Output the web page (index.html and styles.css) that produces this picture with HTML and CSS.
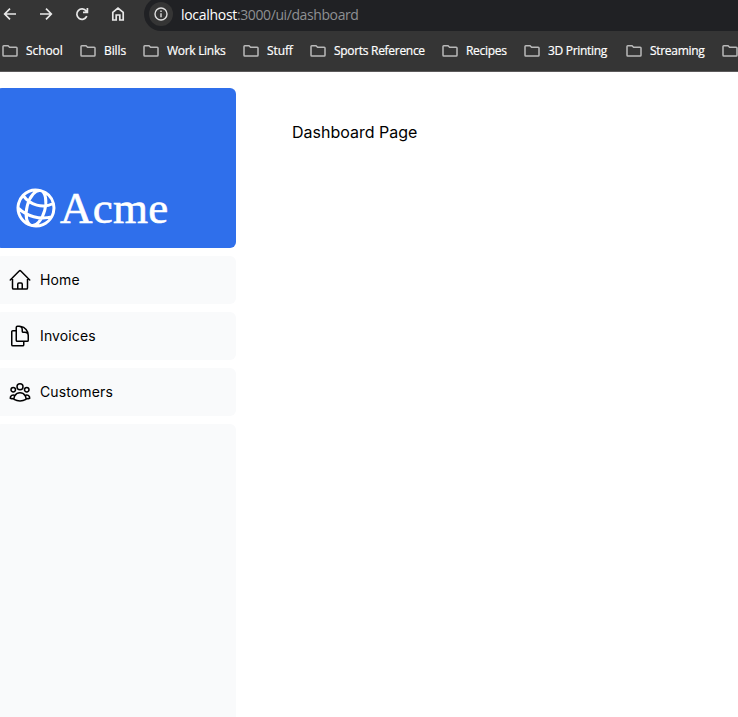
FILE: index.html
```html
<!DOCTYPE html>
<html lang="en">
<head>
<meta charset="utf-8">
<title>Dashboard</title>
<link rel="stylesheet" href="styles.css">
</head>
<body>
<svg class="defs" width="0" height="0">
  <symbol id="folder" viewBox="0 0 16 14"><path d="M1 11.2V2.5Q1 1.7 1.8 1.7H6l1.6 1.6h6.6q.8 0 .8.8v7.1q0 .8-.8.8H1.8q-.8 0-.8-.8Z" fill="none" stroke="#b9b9b9" stroke-width="1.5"/></symbol>
</svg>
<header class="browser">
  <div class="toolbar">
    <nav class="controls">
      <svg viewBox="0 0 16 16"><path d="M14 8H3M8 2.7 2.7 8 8 13.3"/></svg>
      <svg viewBox="0 0 16 16"><path d="M2 8h11M8 2.7 13.3 8 8 13.3"/></svg>
      <svg viewBox="0 0 16 16"><path d="M12.8 10.2A5.2 5.2 0 1 1 12.2 5L13 6M13.4 2v4.4H9"/></svg>
      <svg viewBox="0 0 16 16"><path d="M2.8 14V6.3L8 2.2l5.2 4.1V14H9.8V9H6.2v5Z"/></svg>
    </nav>
    <div class="address">
      <span class="info"><svg viewBox="0 0 16 16"><circle cx="8" cy="8" r="6"/><path d="M8 7.2v4M8 4.5v1.6"/></svg></span>
      <span class="url"><b>localhost</b>:3000/ui/dashboard</span>
    </div>
  </div>
  <div class="bookmarks">
    <a class="school"><svg><use href="#folder"/></svg><span>School</span></a>
    <a class="bills"><svg><use href="#folder"/></svg><span>Bills</span></a>
    <a class="work"><svg><use href="#folder"/></svg><span>Work Links</span></a>
    <a class="stuff"><svg><use href="#folder"/></svg><span>Stuff</span></a>
    <a class="sports"><svg><use href="#folder"/></svg><span>Sports Reference</span></a>
    <a class="recipes"><svg><use href="#folder"/></svg><span>Recipes</span></a>
    <a class="printing"><svg><use href="#folder"/></svg><span>3D Printing</span></a>
    <a class="streaming"><svg><use href="#folder"/></svg><span>Streaming</span></a>
    <a><svg><use href="#folder"/></svg></a>
  </div>
</header>
<div class="page">
  <aside class="sidebar">
    <a class="brand">
      <svg class="globe" viewBox="0 0 24 24"><path d="M12 21a9.004 9.004 0 0 0 8.716-6.747M12 21a9.004 9.004 0 0 1-8.716-6.747M12 21c2.485 0 4.5-4.03 4.5-9S14.485 3 12 3m0 18c-2.485 0-4.5-4.03-4.5-9S9.515 3 12 3m0 0a8.997 8.997 0 0 1 7.843 4.582M12 3a8.997 8.997 0 0 0-7.843 4.582m15.686 0A11.953 11.953 0 0 1 12 10.5c-2.998 0-5.74-1.1-7.843-2.918m15.686 0A8.959 8.959 0 0 1 21 12c0 .778-.099 1.533-.284 2.253m0 0A17.919 17.919 0 0 1 12 16.5c-3.162 0-6.133-.815-8.716-2.247m0 0A9.015 9.015 0 0 1 3 12c0-1.605.42-3.113 1.157-4.418"/></svg>
      <span>Acme</span>
    </a>
    <a class="link"><svg viewBox="0 0 24 24"><path d="m2.25 12 8.954-8.955c.44-.439 1.152-.439 1.591 0L21.75 12M4.5 9.75v10.125c0 .621.504 1.125 1.125 1.125H9.75v-4.875c0-.621.504-1.125 1.125-1.125h2.25c.621 0 1.125.504 1.125 1.125V21h4.125c.621 0 1.125-.504 1.125-1.125V9.75M8.25 21h8.25"/></svg><span>Home</span></a>
    <a class="link"><svg viewBox="0 0 24 24"><path d="M15.75 17.25v3.375c0 .621-.504 1.125-1.125 1.125h-9.75a1.125 1.125 0 0 1-1.125-1.125V7.875c0-.621.504-1.125 1.125-1.125H6.75a9.06 9.06 0 0 1 1.5.124m7.5 10.376h3.375c.621 0 1.125-.504 1.125-1.125V11.25c0-4.46-3.243-8.161-7.5-8.876a9.06 9.06 0 0 0-1.5-.124H9.375c-.621 0-1.125.504-1.125 1.125v3.5m7.5 10.375H9.375a1.125 1.125 0 0 1-1.125-1.125v-9.25m12 6.625v-1.875a3.375 3.375 0 0 0-3.375-3.375h-1.5a1.125 1.125 0 0 1-1.125-1.125v-1.5a3.375 3.375 0 0 0-3.375-3.375H9.75"/></svg><span>Invoices</span></a>
    <a class="link"><svg viewBox="0 0 24 24"><path d="M18 18.72a9.094 9.094 0 0 0 3.741-.479 3 3 0 0 0-4.682-2.72m.94 3.198.001.031c0 .225-.012.447-.037.666A11.944 11.944 0 0 1 12 21c-2.17 0-4.207-.576-5.963-1.584A6.062 6.062 0 0 1 6 18.719m12 0a5.971 5.971 0 0 0-.941-3.197m0 0A5.995 5.995 0 0 0 12 12.75a5.995 5.995 0 0 0-5.058 2.772m0 0a3 3 0 0 0-4.681 2.72 8.986 8.986 0 0 0 3.74.477m.94-3.197a5.971 5.971 0 0 0-.94 3.197M15 6.75a3 3 0 1 1-6 0 3 3 0 0 1 6 0Zm6 3a2.25 2.25 0 1 1-4.5 0 2.25 2.25 0 0 1 4.5 0Zm-13.5 0a2.25 2.25 0 1 1-4.5 0 2.25 2.25 0 0 1 4.5 0Z"/></svg><span>Customers</span></a>
    <div class="filler"></div>
  </aside>
  <main><p>Dashboard Page</p></main>
</div>
</body>
</html>
```
FILE: styles.css
```css
* { box-sizing: border-box; }
body {
  margin: 0;
  height: 717px;
  display: flex;
  flex-direction: column;
  overflow: hidden;
  background: #fff;
  font-family: Inter, sans-serif;
}
.defs { display: none; }
svg { flex: none; display: block; }

.browser {
  height: 72px;
  flex: none;
  background: #353535;
  border-bottom: 1px solid #5c5a5b;
  font-family: "Open Sans", "Noto Sans", sans-serif;
  overflow: hidden;
}
.toolbar { height: 31px; display: flex; }
.controls { width: 144px; flex: none; display: flex; gap: 20px; padding: 6px 0 0 2px; }
.controls svg { width: 16px; height: 16px; fill: none; stroke: #e8e8e8; stroke-width: 1.7; }
.address {
  flex: 1;
  height: 34px;
  margin-top: -3px;
  display: flex;
  align-items: center;
  gap: 8px;
  padding-left: 5px;
  background: #202124;
  border-radius: 17px 0 0 17px;
}
.info {
  width: 24px;
  height: 24px;
  display: grid;
  place-items: center;
  border-radius: 50%;
  background: #353535;
}
.info svg { width: 16px; height: 16px; fill: none; stroke: #dedede; stroke-width: 1.4; }
.url { color: #8e9093; font-size: 14px; letter-spacing: -0.4px; white-space: nowrap; }
.url b { color: #fff; font-weight: 400; letter-spacing: -0.3px; }

.bookmarks { height: 40px; display: flex; align-items: center; padding-left: 2px; }
.bookmarks a { flex: none; display: flex; align-items: center; gap: 8px; font-size: 12px; letter-spacing: -0.3px; color: #fff; white-space: nowrap; }
.bookmarks svg { width: 16px; height: 14px; }
.bookmarks span { padding-bottom: 1px; -webkit-text-stroke: 0.2px #fff; }
.school { width: 78px; }
.bills { width: 63px; }
.work { width: 100px; }
.stuff { width: 67px; }
.sports { width: 132px; }
.recipes { width: 82px; }
.printing { width: 102px; }
.streaming { width: 96px; }
.school span, .bills span, .stuff span { letter-spacing: -0.1px; }

.page { flex: 1; display: flex; padding-top: 16px; }
.sidebar { width: 240px; margin-left: -4px; flex: none; display: flex; flex-direction: column; gap: 8px; }
.brand {
  height: 160px;
  padding: 16px;
  display: flex;
  align-items: flex-end;
  border-radius: 6px;
  background: #2f6feb;
  color: #fff;
}
.globe { width: 48px; height: 48px; fill: none; stroke: #fff; stroke-width: 1.5; transform: rotate(15deg); }
.brand span { font: 45px/47px "Liberation Serif", serif; letter-spacing: 0.3px; -webkit-text-stroke: 0.6px #fff; }
.link {
  height: 48px;
  padding: 0 12px;
  display: flex;
  align-items: center;
  gap: 8px;
  border-radius: 6px;
  background: #f9fafb;
  font-size: 14px;
  font-weight: 400;
  letter-spacing: 0.12px;
  color: #000;
}
.link span { padding-bottom: 2px; }
.link svg { width: 24px; height: 24px; fill: none; stroke: #000; stroke-width: 1.5; stroke-linecap: round; stroke-linejoin: round; }
.filler { flex: 1; background: #f9fafb; border-radius: 6px 6px 0 0; }
main { padding: 32px 56px; font-size: 16px; line-height: 24px; color: #000; }
main p { margin: 0; }
```
